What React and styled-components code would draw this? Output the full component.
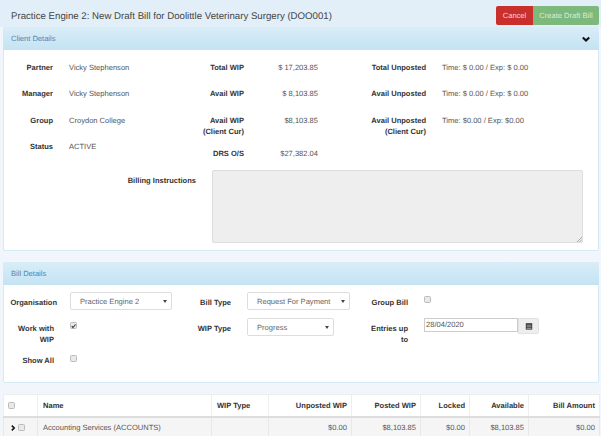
import styled, { createGlobalStyle } from 'styled-components'

const GlobalStyle = createGlobalStyle`
    html, body {
        margin: 0;
        padding: 0;
        height: 100%;
        overflow: hidden;
        background-color: #f0f6fb;
    }
    body {
        font-family: "Liberation Sans", Arial, sans-serif;
        font-size: 7.55px;
        color: #555;
        text-rendering: geometricPrecision;
    }
`

const Page = styled.div`
    width: 601px;
    height: 436px;
    overflow: hidden;
`

const TopBar = styled.div`
    height: 27px;
    display: flex;
    align-items: center;
    justify-content: space-between;
    padding: 0 2px 0 11px;
    background-color: #e3eff8;
`

const Title = styled.h1`
    margin: 6px 0 0;
    font-size: 9.67px;
    font-weight: 400;
    color: #444;
`

const ButtonGroup = styled.div`
    display: flex;
    margin-top: 4px;
`

const Button = styled.div`
    height: 19px;
    display: flex;
    align-items: center;
    justify-content: center;
    width: ${props => props.$width}px;
    color: ${props => props.$danger ? '#f3d4d3' : '#d8ecd8'};
    background-color: ${props => props.$danger ? '#c9302c' : '#7db97d'};
    border-radius: ${props => props.$danger ? '2px 0 0 2px' : '0 2px 2px 0'};
`

const Panel = styled.section`
    margin: 0 2px ${props => props.$gap}px 3px;
    height: ${props => props.$height}px;
    box-sizing: border-box;
    background-color: #fff;
    border: 1px solid #d6eaf5;
    border-radius: 2px;
`

const PanelHeading = styled.div`
    height: 23px;
    margin: -1px -1px 0;
    padding: 0 9px 0 8px;
    display: flex;
    align-items: center;
    justify-content: space-between;
    color: #4a86b8;
    background: linear-gradient(#d9edf7, #c4e3f3);
    border-radius: 2px 2px 0 0;
`

const Columns = styled.div`
    display: flex;
    padding-top: 7px;
`

const Column = styled.div`
    width: ${props => props.$width}px;
    flex: none;
`

const InfoRow = styled.div`
    display: flex;
    gap: 16px;
    min-height: ${props => props.$height || 26.4}px;
    line-height: 11px;
    padding-top: 5px;
    box-sizing: border-box;
`

const Label = styled.div`
    width: ${props => props.$width}px;
    flex: none;
    text-align: right;
    font-weight: 700;
    color: #333;
`

const Value = styled.div`
    width: ${props => props.$width ? `${props.$width}px` : 'auto'};
    text-align: ${props => props.$right ? 'right' : 'left'};
    white-space: nowrap;
`

const InstructionsRow = styled.div`
    display: flex;
    gap: 16px;
    margin-top: 1px;
`

const InstructionsLabel = styled(Label)`
    padding-top: 5px;
    line-height: 11px;
`

const Instructions = styled.div`
    position: relative;
    width: 371px;
    height: 73px;
    box-sizing: border-box;
    background-color: #eee;
    border: 1px solid #ddd;
    border-radius: 2px;
`

const Grip = styled.svg`
    position: absolute;
    right: 0;
    bottom: 0;
`

const FormGrid = styled.div`
    display: grid;
    grid-template-columns: 50px 102px 43px 103px 42px auto;
    grid-template-rows: 18px 24px auto;
    column-gap: 16px;
    row-gap: 8px;
    padding-top: 7px;
    justify-content: start;
`

const FormLabel = styled.div`
    text-align: right;
    font-weight: 700;
    color: #333;
    line-height: 11px;
    padding-top: 5px;
    white-space: nowrap;
    margin-right: ${props => props.$shift || 0}px;
`

const Select = styled.div`
    width: ${props => props.$width}px;
    height: 18px;
    box-sizing: border-box;
    display: flex;
    align-items: center;
    justify-content: space-between;
    padding: 0 4px 0 9px;
    color: #666;
    background-color: #fff;
    border: 1px solid #ddd;
    border-radius: 2px;
`

const Caret = styled.span`
    width: 0;
    height: 0;
    border-left: 2px solid transparent;
    border-right: 2px solid transparent;
    border-top: 3px solid #444;
`

const Check = styled.span`
    display: flex;
    align-items: center;
    justify-content: center;
    width: 7px;
    height: 7px;
    flex: none;
    box-sizing: border-box;
    background-color: #e9e9e9;
    border: 1px solid #bbb;
    border-radius: 1.5px;
    margin-top: ${props => props.$top || 0}px;
`

const DateGroup = styled.div`
    display: flex;
    align-items: flex-start;
`

const DateInput = styled.div`
    width: 94px;
    height: 14px;
    box-sizing: border-box;
    padding: 1px;
    line-height: 10px;
    background-color: #fff;
    border: 1px solid #ccc;
`

const DateButton = styled.div`
    width: 21px;
    height: 16px;
    display: flex;
    align-items: center;
    justify-content: center;
    background-color: #eee;
    border: 1px solid #e2e2e2;
    box-sizing: border-box;
    border-radius: 0 2px 2px 0;
`

const Table = styled.table`
    width: 596px;
    margin-left: 3px;
    table-layout: fixed;
    border-collapse: collapse;
    background-color: #fff;
`

const Th = styled.th`
    height: 21px;
    padding: 0 4px 0 ${props => props.$tight ? 4 : 5}px;
    font-weight: 700;
    color: #333;
    text-align: ${props => props.$right ? 'right' : 'left'};
    border: 1px solid #eee;
    border-bottom: 2px solid #ddd;
`

const Td = styled.td`
    height: 19px;
    padding: 0 4px 0 5px;
    text-align: ${props => props.$right ? 'right' : 'left'};
    background-color: #f5f5f5;
    border: 1px solid #e8e8e8;
    white-space: nowrap;
`

const SelectCell = styled.div`
    display: flex;
    align-items: center;
    gap: 2px;
    margin-left: 1px;
`

const Chevron = ({ down, size }) => (
    <svg width={size} height={size} viewBox="0 0 10 10" style={{ transform: down ? 'none' : 'rotate(-90deg)' }}>
        <path d="M1 3l4 4 4-4" fill="none" stroke="#111" strokeWidth="2.6" />
    </svg>
)

const Tick = () => (
    <svg width="6" height="6" viewBox="0 0 10 10">
        <path d="M1.5 5.5l2.5 2.5 5-6" fill="none" stroke="#333" strokeWidth="2.2" />
    </svg>
)

const columns = [
    ['Name', 174, false],
    ['WIP Type', 57, false],
    ['Unposted WIP', 83, true],
    ['Posted WIP', 69, true],
    ['Locked', 49, true],
    ['Available', 59, true],
    ['Bill Amount', 71, true],
]

const cells = ['Accounting Services (ACCOUNTS)', '', '$0.00', '$8,103.85', '$0.00', '$8,103.85', '$0.00']

export default function App() {
    return (
        <Page>
            <GlobalStyle />
            <TopBar>
                <Title>Practice Engine 2: New Draft Bill for Doolittle Veterinary Surgery (DOO001)</Title>
                <ButtonGroup>
                    <Button $danger $width={37}>Cancel</Button>
                    <Button $width={66}>Create Draft Bill</Button>
                </ButtonGroup>
            </TopBar>

            <Panel $height={224} $gap={11}>
                <PanelHeading>Client Details <Chevron down size={8} /></PanelHeading>
                <Columns>
                    <Column $width={129}>
                        <InfoRow><Label $width={49}>Partner</Label><Value>Vicky Stephenson</Value></InfoRow>
                        <InfoRow><Label $width={49}>Manager</Label><Value>Vicky Stephenson</Value></InfoRow>
                        <InfoRow><Label $width={49}>Group</Label><Value>Croydon College</Value></InfoRow>
                        <InfoRow><Label $width={49}>Status</Label><Value>ACTIVE</Value></InfoRow>
                    </Column>
                    <Column $width={189}>
                        <InfoRow><Label $width={111}>Total WIP</Label><Value $width={58} $right>$ 17,203.85</Value></InfoRow>
                        <InfoRow><Label $width={111}>Avail WIP</Label><Value $width={58} $right>$ 8,103.85</Value></InfoRow>
                        <InfoRow $height={33}><Label $width={111}>Avail WIP<br />(Client Cur)</Label><Value $width={58} $right>$8,103.85</Value></InfoRow>
                        <InfoRow><Label $width={111}>DRS O/S</Label><Value $width={58} $right>$27,382.04</Value></InfoRow>
                    </Column>
                    <Column $width={270}>
                        <InfoRow><Label $width={104}>Total Unposted</Label><Value>Time: $ 0.00 / Exp: $ 0.00</Value></InfoRow>
                        <InfoRow><Label $width={104}>Avail Unposted</Label><Value>Time: $ 0.00 / Exp: $ 0.00</Value></InfoRow>
                        <InfoRow $height={33}><Label $width={104}>Avail Unposted<br />(Client Cur)</Label><Value>Time: $0.00 / Exp: $0.00</Value></InfoRow>
                    </Column>
                </Columns>
                <InstructionsRow>
                    <InstructionsLabel $width={192}>Billing Instructions</InstructionsLabel>
                    <Instructions>
                        <Grip width="6" height="6" viewBox="0 0 6 6">
                            <path d="M1 6l5-5M3.5 6L6 3.5" stroke="#999" strokeWidth="0.8" />
                        </Grip>
                    </Instructions>
                </InstructionsRow>
            </Panel>

            <Panel $height={121} $gap={11}>
                <PanelHeading>Bill Details</PanelHeading>
                <FormGrid>
                    <FormLabel $shift={-3}>Organisation</FormLabel>
                    <Select $width={102}>Practice Engine 2<Caret /></Select>
                    <FormLabel>Bill Type</FormLabel>
                    <Select $width={103}>Request For Payment<Caret /></Select>
                    <FormLabel>Group Bill</FormLabel>
                    <Check $top={4} />

                    <FormLabel>Work with<br />WIP</FormLabel>
                    <Check $top={4}><Tick /></Check>
                    <FormLabel>WIP Type</FormLabel>
                    <Select $width={87}>Progress<Caret /></Select>
                    <FormLabel>Entries up<br />to</FormLabel>
                    <DateGroup>
                        <DateInput>28/04/2020</DateInput>
                        <DateButton>
                            <svg width="8" height="8" viewBox="0 0 10 10">
                                <path d="M1 1.5h8v8H1z" fill="#333" />
                                <path d="M2 4h6M2 6h6M2 8h6" stroke="#eee" strokeWidth="0.7" />
                            </svg>
                        </DateButton>
                    </DateGroup>

                    <FormLabel>Show All</FormLabel>
                    <Check $top={5} />
                </FormGrid>
            </Panel>

            <Table>
                <colgroup>
                    <col style={{ width: 34 }} />
                    {columns.map(c => <col key={c[0]} style={{ width: c[1] }} />)}
                </colgroup>
                <thead>
                    <tr>
                        <Th $tight><Check /></Th>
                        {columns.map(c => <Th key={c[0]} $right={c[2]}>{c[0]}</Th>)}
                    </tr>
                </thead>
                <tbody>
                    <tr>
                        <Td><SelectCell><Chevron size={6} /><Check /></SelectCell></Td>
                        {cells.map((text, i) => <Td key={i} $right={columns[i][2]}>{text}</Td>)}
                    </tr>
                </tbody>
            </Table>
        </Page>
    )
}
